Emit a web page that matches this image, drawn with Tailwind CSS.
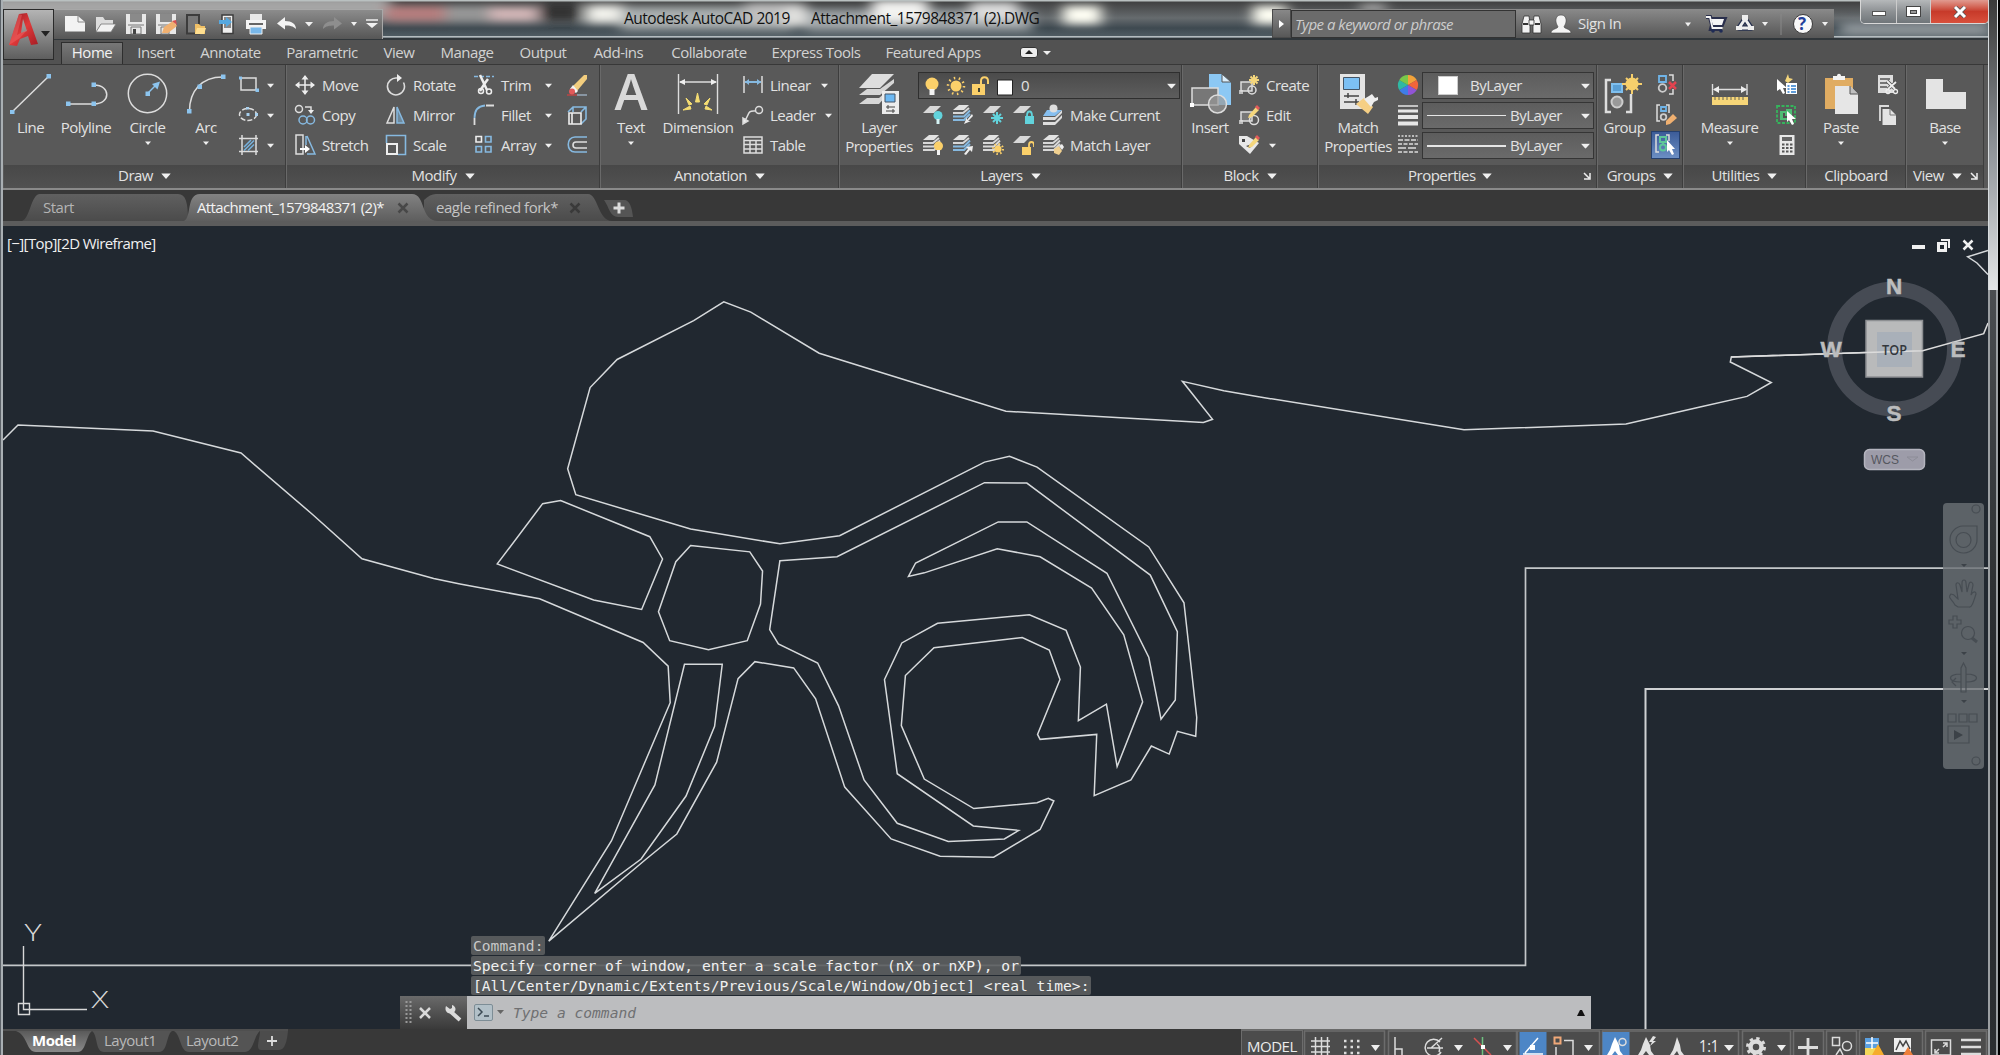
<!DOCTYPE html>
<html lang="en">
<head>
<meta charset="utf-8">
<title>Autodesk AutoCAD 2019</title>
<script src="https://cdn.jsdelivr.net/npm/@tailwindcss/browser@4"></script>
</head>
<body class="bg-black">
<svg width="0" height="0" class="absolute">
  <defs>
    <symbol id="caret" viewBox="0 0 8 5"><path d="M0 0.5h8L4 5z" fill="#f0f0f0"/></symbol>
    <symbol id="sheets" viewBox="0 0 22 22"><path d="M7 1h10l-5 5H1z" fill="#e2e2e2"/><path d="M1 9h10l6-5M1 12.500h11l6-6M1 16h11l6-6" stroke="#d8d8d8" stroke-width="2" fill="none"/></symbol>
    <symbol id="sheetsblue" viewBox="0 0 22 22"><path d="M7 1h10l-5 5H1z" fill="#e2e2e2"/><path d="M1 9h10l6-5" stroke="#d8d8d8" stroke-width="2" fill="none"/><path d="M1 12.500h11l6-6M1 16h11l6-6" stroke="#86b9e0" stroke-width="2" fill="none"/></symbol>
    <symbol id="sheet1" viewBox="0 0 22 22"><path d="M8 2h11l-7 7H1z" fill="#d8d8d8"/></symbol>
    <linearGradient id="tabg" x1="0" y1="0" x2="0" y2="1"><stop offset="0" stop-color="#606060"/><stop offset="1" stop-color="#4b4b4b"/></linearGradient>
    <linearGradient id="taba" x1="0" y1="0" x2="0" y2="1"><stop offset="0" stop-color="#828282"/><stop offset="1" stop-color="#5e5e5e"/></linearGradient>
    <linearGradient id="tabm" x1="0" y1="0" x2="0" y2="1"><stop offset="0" stop-color="#5a5a5a"/><stop offset="1" stop-color="#8a8a8a"/></linearGradient>
    <linearGradient id="redA" x1="0" y1="0" x2="1" y2="1"><stop offset="0" stop-color="#8e1620"/><stop offset=".5" stop-color="#e03a3a"/><stop offset="1" stop-color="#a51c24"/></linearGradient>
  </defs>
</svg>

<div class="relative flex h-[1055px] w-[2000px] overflow-hidden bg-black font-['Open_Sans','Noto_Sans',sans-serif] text-[15px] leading-[19px] tracking-[-0.5px] whitespace-nowrap text-[#e2e2e2]">
  <!-- left frame -->
  <div class="w-[3px] shrink-0 border-l border-[#5b6167] bg-[#a9afb3]"></div>

  <div class="flex w-[1985px] shrink-0 flex-col">
    <!-- title bar -->
    <header class="relative flex h-[40px] shrink-0 bg-[#454d53]">
      <svg class="absolute top-0 left-0" width="1985" height="40" viewBox="3 0 1985 40">
        <defs>
          <filter id="soft" x="-30%" y="-60%" width="160%" height="220%"><feGaussianBlur stdDeviation="7 4"/></filter>
          <linearGradient id="glass" x1="0" y1="0" x2="0" y2="1"><stop offset="0" stop-color="#3c3c3c"/><stop offset=".45" stop-color="#666b6e"/><stop offset=".7" stop-color="#3e4950"/><stop offset="1" stop-color="#58646b"/></linearGradient>
        </defs>
        <rect x="3" width="1985" height="40" fill="url(#glass)"/>
        <g filter="url(#soft)">
          <rect x="-10" y="-4" width="400" height="22" fill="#a5a5a5"/>
          <rect x="385" y="6" width="60" height="15" fill="#b97f7f"/>
          <rect x="445" y="6" width="50" height="15" fill="#999"/>
          <rect x="490" y="7" width="48" height="14" fill="#d7b9ba"/>
          <rect x="540" y="3" width="40" height="18" fill="#333"/>
          <rect x="586" y="5" width="38" height="18" fill="#f2f2ec"/>
          <rect x="620" y="7" width="172" height="23" fill="#abb0b1"/>
          <rect x="745" y="3" width="60" height="20" fill="#c0c0c0"/>
          <rect x="785" y="8" width="22" height="18" fill="#e2e2e0"/>
          <rect x="806" y="10" width="226" height="21" fill="#a2a7aa"/>
          <rect x="872" y="0" width="56" height="22" fill="#f2f2f0"/>
          <rect x="970" y="2" width="48" height="18" fill="#dcdcdc"/>
          <rect x="1063" y="6" width="38" height="18" fill="#fffff4"/>
          <rect x="1253" y="6" width="34" height="18" fill="#fffff4"/>
          <rect x="1360" y="4" width="26" height="8" fill="#b0b0b0"/>
          <rect x="1840" y="22" width="150" height="14" fill="#8d9499"/>
        </g>
        <rect x="3" y="0" width="1985" height="1.500" fill="#b9c0c0"/>
        <rect x="383" y="36" width="1605" height="1.500" fill="#b5bcbf"/>
        <rect x="3" y="38" width="1985" height="2" fill="#30363a"/>
      </svg>
      <!-- quick access toolbar -->
      <div class="relative mt-[9px] ml-[51px] h-[30px] w-[329px] border-t border-r border-[#a8a8a8] bg-linear-to-b from-[#8c8c8c] via-[#717171] to-[#565656]">
        <svg width="328" height="28" viewBox="54 10 328 28" fill="none">
          <path d="M65 16h13l7 6v9.500H65z" fill="#f2f2f2"/><path d="M78 16v6h7" stroke="#888"/>
          <path d="M96 32V17h7l2 3h8v4h-12z" fill="#dcdcdc"/><path d="M101 24h15l-5 8H96z" fill="#f2f2f2" stroke="#777" stroke-width=".8"/>
          <path d="M126 14h20v20h-20z" fill="#e8e8e8"/><path d="M130 14h12v8h-12z" fill="#8a8a8a"/><path d="M128 25h16M131 27h10v7h-10z" stroke="#777"/><path d="M133 29h3v5h-3z" fill="#444"/>
          <path d="M156 14h20v20h-20z" fill="#e8e8e8"/><path d="M160 14h12v8h-12z" fill="#8a8a8a"/><path d="M158 25h16M161 27h8v7h-8z" stroke="#777"/><path d="M162 33l2-6 9-6 4 5-9 7z" fill="#f0b070"/><path d="M172 21l4-1 1 5z" fill="#d65050"/>
          <rect x="187" y="15" width="12" height="18.500" stroke="#3c3c3c" stroke-width="2" fill="#777"/><path d="M195 34v-10h4l2 2h4v8z" fill="#f0c066"/><path d="M197 28h9l-2 6h-9z" fill="#ffdf90"/>
          <rect x="222" y="15" width="11" height="18.500" stroke="#3c3c3c" stroke-width="1.500" fill="#efefef"/><rect x="224" y="17" width="7" height="11" fill="#888"/><path d="M219 20h7v-3l6 5-6 5v-3h-7z" fill="#55a8e0"/>
          <path d="M250 14h12v6h-12z" fill="#e8e8e8"/><path d="M246 20h20v9h-20z" fill="#f4f4f4"/><path d="M249 24h14" stroke="#666" stroke-width="2"/><path d="M250 27h12v7h-12z" fill="#79b8ea" stroke="#eee"/>
          <path d="M277 23.500l8-6.500v4c7 0 11 3 11 8-3-3-6-3.500-11-3.500v4z" fill="#f4f4f4"/>
          <path d="M342 23.500l-8-6.500v4c-7 0-11 3-11 8 3-3 6-3.500 11-3.500v4z" fill="#8e8e8e"/>
          <path d="M305 22h8l-4 4.500zM351 22h6l-3 4zM366 23h12l-6 5z" fill="#f0f0f0"/><path d="M366 20h12" stroke="#f0f0f0" stroke-width="1.500"/>
        </svg>
      </div>
      <!-- document title -->
      <div class="relative flex h-[38px] w-[889px] text-[15.5px] leading-[36px] text-[#101010]">
        <span class="ml-[241px] w-[187px]">Autodesk AutoCAD 2019</span>
        <span>Attachment_1579848371 (2).DWG</span>
      </div>
      <!-- info centre -->
      <div class="relative mt-[9px] flex h-[29px] w-[562px] items-center bg-linear-to-b from-[#8a8a8a] to-[#565656]">
        <div class="flex h-[29px] w-[19px] items-center justify-center border border-[#4a4a4a]"><svg width="6" height="8" viewBox="0 0 6 8"><path d="M0 0l5 4-5 4z" fill="#fff"/></svg></div>
        <div class="h-[28px] w-[225px] border border-[#333] bg-[#6b6b6b] pl-[3px] text-[15px] leading-[26px] text-[#cdcdcd] italic">Type a keyword or phrase</div>
        <svg width="58" height="28" viewBox="1517 10 58 28"><g fill="#f2f2f2" stroke="#333" stroke-width=".8"><path d="M1525 16h5l1 8v9h-8v-9zM1535 16h5l2 8v9h-8v-9z"/><path d="M1530 20h5v5h-5z"/></g><path d="M1524 24h5M1536 24h5" stroke="#333" stroke-width="2"/><path d="M1562 15c4 0 5.500 3 5 7-.5 3-2 4-2 5 1 2 7 2 7 6h-20c0-4 6-4 7-6 0-1-1.500-2-2-5-.5-4 1-7 5-7z" fill="#f4f4f4" stroke="#444" stroke-width=".6"/></svg>
        <div class="w-[104px] pl-[4px]">Sign In</div>
        <svg width="156" height="28" viewBox="1679 10 156 28"><path d="M1686 22.500h6l-3 4zM1763 22h6l-3 4zM1823 22h6l-3 4z" fill="#f0f0f0"/><path d="M1707 17h4l2 8h10l2.500-6h-13M1713 25l-1 4h11" stroke="#2a2f4c" stroke-width="4" fill="none"/><path d="M1712 19h13l-2 6h-9z" fill="#f5f5f5"/><path d="M1707 17h4l2.500 11h10" stroke="#f5f5f5" stroke-width="1.800" fill="none"/><circle cx="1714" cy="31" r="1.800" fill="#1f2b55"/><circle cx="1722" cy="31" r="1.800" fill="#1f2b55"/><path d="M1746 19l-6 9h12z" stroke="#26304f" stroke-width="5.500" fill="none" stroke-linejoin="round"/><path d="M1746 19l-6 9h12z" stroke="#eee" stroke-width="3" fill="none" stroke-linejoin="round"/><path d="M1743 15h6v5h-6zM1737 26h6v4h-6zM1749 26h6v4h-6z" fill="#eee"/><path d="M1782 14v21" stroke="#888"/><circle cx="1804" cy="24" r="9.500" fill="#f8f8f8" stroke="#3a3a3a"/></svg>
        <div class="absolute top-[4px] left-[526px] text-[17px] leading-[21px] font-bold text-[#233f9a]">?</div>
      </div>
      <!-- window buttons -->
      <div class="absolute top-0 left-[1857px] flex h-[24px] w-[129px] overflow-hidden rounded-b-[5px] border border-t-0 border-[#d8d8d8]">
        <div class="flex w-[36px] items-center justify-center border-r border-[#ccc] bg-linear-to-b from-[#b5b8ba] via-[#8d9194] to-[#70767a]"><div class="mt-[4px] h-[5px] w-[14px] border border-[#555] bg-white"></div></div>
        <div class="flex w-[34px] items-center justify-center border-r border-[#ccc] bg-linear-to-b from-[#b5b8ba] via-[#8d9194] to-[#70767a]"><div class="flex h-[11px] w-[15px] items-center justify-center border border-[#444] bg-white"><div class="h-[4px] w-[7px] border border-[#444] bg-[#999]"></div></div></div>
        <div class="flex grow items-center justify-center bg-linear-to-b from-[#e09a90] via-[#c73a2a] to-[#d8503c]"><svg width="14" height="12" viewBox="0 0 14 12"><path d="M2 1l10 10M12 1L2 11" stroke="#555" stroke-width="4.500"/><path d="M2 1l10 10M12 1L2 11" stroke="#fff" stroke-width="3"/></svg></div>
      </div>
      <!-- application button -->
      <div class="absolute top-[9px] left-0 z-10 h-[51px] w-[51px] border border-[#2a2a2a] bg-linear-to-b from-[#b4b4b4] via-[#8a8a8a] to-[#5e5e5e]">
        <svg width="49" height="49" viewBox="4 10 49 49"><path d="M9 45L19 14l8-1 11 31-7 1-3-9-8 3-3 7zM21 33l6-2-4-12z" fill="url(#redA)"/><path d="M19 14l3 1-5 20 11-6-8 9-11 7z" fill="#ef6a6a" fill-opacity=".45"/><path d="M41 31h9l-4.500 5.500z" fill="#222"/></svg>
      </div>
    </header>

    <!-- ribbon tabs -->
    <nav class="flex h-[25px] shrink-0 items-end border-b border-[#383838] bg-[#525252] pl-[58px] text-center text-[#d2d2d2]">
      <div class="h-[22px] w-[62px] border border-b-0 border-[#2e2e2e] bg-linear-to-b from-[#777] to-[#5c5c5c] leading-[18px] text-[#f2f2f2]">Home</div>
      <div class="h-[21px] w-[66px] leading-[18px]">Insert</div>
      <div class="h-[21px] w-[83px] leading-[18px]">Annotate</div>
      <div class="h-[21px] w-[100px] leading-[18px]">Parametric</div>
      <div class="h-[21px] w-[54px] leading-[18px]">View</div>
      <div class="h-[21px] w-[82px] leading-[18px]">Manage</div>
      <div class="h-[21px] w-[70px] leading-[18px]">Output</div>
      <div class="h-[21px] w-[81px] leading-[18px]">Add-ins</div>
      <div class="h-[21px] w-[100px] leading-[18px]">Collaborate</div>
      <div class="h-[21px] w-[114px] leading-[18px]">Express Tools</div>
      <div class="h-[21px] w-[120px] leading-[18px]">Featured Apps</div>
      <svg class="ml-[26px] h-[24px]" width="34" height="24" viewBox="1019 40 34 24"><rect x="1020.500" y="47.500" width="17" height="10" rx="2.500" fill="#ededed" stroke="#333"/><path d="M1025 54h8l-4-4z" fill="#222"/><path d="M1043 51h8l-4 4z" fill="#eee"/></svg>
    </nav>

    <!-- ribbon panels -->
    <div class="flex h-[123px] shrink-0 bg-[#595959] pl-[1px]">
      <!-- Draw -->
      <section class="flex w-[282px] flex-col border-r border-[#3d3d3d]">
        <div class="flex h-[100px] pt-[5px]">
          <div class="flex w-[53px] flex-col items-center gap-[4px] pt-[1px]"><svg width="43" height="43" viewBox="10 71 43 43"><path d="M13 112L50 76" stroke="#ddd" stroke-width="1.500"/><path d="M11 110h4.500v4.500H11zM47.500 74h4.500v4.500h-4.500z" fill="#8cc4ee"/></svg><span>Line</span></div>
          <div class="flex w-[58px] flex-col items-center gap-[4px] pt-[1px]"><svg width="43" height="43" viewBox="64 71 43 43"><path d="M67 104h26c17 0 17-19 0-19" fill="none" stroke="#ddd" stroke-width="1.500"/><path d="M65 101.500h4.500v4.500H65zM90.500 101.500h4.500v4.500h-4.500zM90.500 82.500h4.500v4.500h-4.500z" fill="#8cc4ee"/></svg><span>Polyline</span></div>
          <div class="flex w-[65px] flex-col items-center gap-[4px] pt-[1px]"><svg width="43" height="43" viewBox="126 71 43 43"><circle cx="147.500" cy="93.500" r="19.200" fill="none" stroke="#ddd" stroke-width="1.500"/><path d="M148 93l8-8" stroke="#8cc4ee" stroke-width="1.500"/><path d="M160 81.500l-8 2.500 5.500 5.500zM145.500 91.500h4.500v4.500h-4.500z" fill="#8cc4ee"/></svg><span>Circle</span><svg width="6" height="4"><use href="#caret"/></svg></div>
          <div class="flex w-[52px] flex-col items-center gap-[4px] pt-[1px]"><svg width="43" height="43" viewBox="186 71 43 43"><path d="M190.500 111c0-20 12-34 33-34" fill="none" stroke="#ddd" stroke-width="1.500"/><path d="M188 109h4.500v4.500H188zM198.500 84.500h4.500v4.500h-4.500zM222 74.500h4.500v4.500H222z" fill="#8cc4ee"/></svg><span>Arc</span><svg width="6" height="4"><use href="#caret"/></svg></div>
          <div class="flex flex-col pl-[5px]">
            <div class="flex h-[30px] items-center gap-[8px]"><svg width="22" height="22" viewBox="236 75 22 22"><path d="M240 79h15v12h-15z" fill="none" stroke="#ddd" stroke-width="1.500"/><path d="M238 77.500h3v3h-3zM254.500 89.500h3.500v3.500h-3.500z" fill="#8cc4ee"/></svg><svg width="7" height="5"><use href="#caret"/></svg></div>
            <div class="flex h-[30px] items-center gap-[8px]"><svg width="22" height="22" viewBox="236 105 22 22"><ellipse cx="247" cy="115.500" rx="8.500" ry="6" fill="none" stroke="#ddd" stroke-width="1.500" stroke-dasharray="5 2"/><path d="M245.500 114h3v3h-3zM245 108h3v2.500h-3zM254 114h3v3h-3z" fill="#a8d0ee"/></svg><svg width="7" height="5"><use href="#caret"/></svg></div>
            <div class="flex h-[30px] items-center gap-[8px]"><svg width="22" height="22" viewBox="236 135 22 22"><path d="M238 139.500h19M238 152.500h19M241 136v20M255 136v20" stroke="#ddd" stroke-width="1.500"/><path d="M243 148l7-7M243 151.500l10-10M247 151.500l6-6" stroke="#77b2de" stroke-width="1.500"/></svg><svg width="7" height="5"><use href="#caret"/></svg></div>
          </div>
        </div>
        <footer class="flex h-[23px] items-center justify-center gap-[8px] bg-linear-to-b from-[#484848] to-[#515151] pb-[2px]">Draw <svg width="10" height="6" viewBox="0 0 8 5"><use href="#caret"/></svg></footer>
      </section>
      <!-- Modify -->
      <section class="flex w-[314px] flex-col border-r border-l border-r-[#3d3d3d] border-l-[#696969]">
        <div class="flex h-[100px] pt-[5px]">
          <div class="w-[95px] pl-[7px]">
            <div class="flex h-[30px] items-center gap-[6px]"><svg width="22" height="22" viewBox="0 0 22 22"><path d="M11 2v18M2 11h18" stroke="#eee" stroke-width="1.500"/><path d="M11 1l3.500 4.500h-7zM11 21l3.500-4.500h-7zM1 11l4.500-3.500v7zM21 11l-4.500-3.500v7z" fill="#eee"/></svg>Move</div>
            <div class="flex h-[30px] items-center gap-[6px]"><svg width="22" height="22" viewBox="0 0 22 22" fill="none" stroke-width="1.500"><circle cx="5" cy="5" r="3.500" stroke="#ddd"/><path d="M11 3h6v5" stroke="#ddd"/><path d="M14 6h6l-3 4z" fill="#eee"/><circle cx="9" cy="16" r="4" stroke="#86b9e0"/><circle cx="16.500" cy="16" r="4" stroke="#86b9e0"/></svg>Copy</div>
            <div class="flex h-[30px] items-center gap-[6px]"><svg width="22" height="22" viewBox="0 0 22 22" fill="none" stroke-width="1.500"><path d="M2 1h7v19H2z" stroke="#ddd"/><path d="M13 2l8 18h-8M12 2v9" stroke="#86b9e0"/><path d="M6 15h6" stroke="#fff" stroke-width="2"/><path d="M11 11l5 4-5 4z" fill="#fff"/></svg>Stretch</div>
          </div>
          <div class="w-[87px] pl-[3px]">
            <div class="flex h-[30px] items-center gap-[6px]"><svg width="22" height="22" viewBox="0 0 22 22" fill="none" stroke-width="1.600"><path d="M12 4a8.500 8.500 0 1 0 6.500 4.500" stroke="#ddd"/><path d="M12 0l5 4-5 4z" fill="#eee"/></svg>Rotate</div>
            <div class="flex h-[30px] items-center gap-[6px]"><svg width="22" height="22" viewBox="0 0 22 22" fill="none" stroke-width="1.500"><path d="M9 3v16H2z" stroke="#ddd"/><path d="M12 3v16h7z" fill="#86b9e0" fill-opacity=".5" stroke="#86b9e0"/></svg>Mirror</div>
            <div class="flex h-[30px] items-center gap-[6px]"><svg width="22" height="22" viewBox="0 0 22 22" fill="none"><path d="M1.500 9V1.500h19v19H13" stroke="#86b9e0" stroke-width="1.600"/><path d="M2 10h10v10H2z" stroke="#eee" stroke-width="2"/></svg>Scale</div>
          </div>
          <div class="w-[92px] pl-[4px]">
            <div class="flex h-[30px] items-center gap-[6px]"><svg width="22" height="22" viewBox="0 0 22 22" fill="none"><path d="M1 2.500h20" stroke="#86b9e0" stroke-width="1.500" stroke-dasharray="4 2"/><path d="M7 1l7 15M15 5l-3 4-5 8" stroke="#eee" stroke-width="2.500"/><circle cx="8" cy="17" r="2.500" stroke="#eee" stroke-width="1.500"/><circle cx="16" cy="17.500" r="2.500" stroke="#eee" stroke-width="1.500"/></svg><span class="w-[38px]">Trim</span><svg width="7" height="5"><use href="#caret"/></svg></div>
            <div class="flex h-[30px] items-center gap-[6px]"><svg width="22" height="22" viewBox="0 0 22 22" fill="none" stroke-width="1.800"><path d="M1.500 14C1.500 6 5 2 12 1.500" stroke="#86b9e0"/><path d="M13 1.500h8M1.500 14v7" stroke="#ddd"/></svg><span class="w-[38px]">Fillet</span><svg width="7" height="5"><use href="#caret"/></svg></div>
            <div class="flex h-[30px] items-center gap-[6px]"><svg width="22" height="22" viewBox="0 0 22 22" fill="none" stroke-width="1.600" stroke="#86b9e0"><path d="M3 2.500h5.500v5.500H3z" stroke="#eee"/><path d="M12.500 2.500H18v5.500h-5.500zM3 12.500h5.500V18H3zM12.500 12.500H18V18h-5.500z"/></svg><span class="w-[38px]">Array</span><svg width="7" height="5"><use href="#caret"/></svg></div>
          </div>
          <div class="pl-[4px]">
            <div class="flex h-[30px] items-center"><svg width="24" height="24" viewBox="0 0 24 24"><path d="M2 22h10" stroke="#b44" stroke-width="1.500"/><path d="M12 22h10" stroke="#9ab" stroke-width="1.500"/><path d="M8 13L19 2l3 0v4L12 18z" fill="#f2cd7e"/><path d="M8 12l5 6-2 2-6-4z" fill="#f4f4f4"/><circle cx="7" cy="18.500" r="3" fill="#e25a5a"/></svg></div>
            <div class="flex h-[30px] items-center"><svg width="24" height="24" viewBox="0 0 24 24" fill="none" stroke-width="1.600"><path d="M3 9l5-5h13v12l-5 5M16 9l5-5M8 4v5" stroke="#86b9e0"/><path d="M4 10h12v11H4zM7 10v11" stroke="#eee"/></svg></div>
            <div class="flex h-[30px] items-center"><svg width="24" height="24" viewBox="0 0 24 24" fill="none" stroke-width="1.600"><path d="M22 4H10c-9 0-9 15 0 15h12" stroke="#86b9e0"/><path d="M22 9H11c-4 0-4 6 0 6h11" stroke="#ddd"/></svg></div>
          </div>
        </div>
        <footer class="flex h-[23px] items-center justify-center gap-[8px] bg-linear-to-b from-[#484848] to-[#515151] pb-[2px]">Modify <svg width="10" height="6" viewBox="0 0 8 5"><use href="#caret"/></svg></footer>
      </section>
      <!-- Annotation -->
      <section class="flex w-[239px] flex-col border-r border-l border-r-[#3d3d3d] border-l-[#696969]">
        <div class="flex h-[100px] pt-[5px]">
          <div class="flex w-[60px] flex-col items-center gap-[4px] pt-[1px]"><span class="flex h-[43px] items-end overflow-visible text-[50px] leading-[46px] font-semibold tracking-normal text-[#d9d9d9]">A</span><span>Text</span><svg width="6" height="4"><use href="#caret"/></svg></div>
          <div class="flex w-[74px] flex-col items-center gap-[4px] pt-[1px]"><svg width="43" height="43" viewBox="677 71 43 43"><path d="M678.500 74v40M717.500 74v40M680 82h36" stroke="#ddd" stroke-width="1.400"/><path d="M679 82l6-3v6zM717 82l-6-3v6z" fill="#eee"/><path d="M683 110l8-1-1-3zM712 110l-7-1 1-3zM686 98l6 6-3 1zM710 98l-6 6 3 1zM697.500 93l-2 9h4z" fill="#f4dc72" stroke="#f4dc72"/></svg><span>Dimension</span></div>
          <div class="pl-[7px]">
            <div class="flex h-[30px] items-center gap-[6px]"><svg width="22" height="22" viewBox="0 0 22 22" fill="none" stroke-width="1.500"><path d="M2 2v17M20 2v17" stroke="#ddd"/><path d="M3 8h16" stroke="#86b9e0" stroke-width="2"/><path d="M3 8l4-3v6zM19 8l-4-3v6z" fill="#86b9e0"/></svg>Linear<svg class="ml-[4px]" width="7" height="5"><use href="#caret"/></svg></div>
            <div class="flex h-[30px] items-center gap-[6px]"><svg width="22" height="22" viewBox="0 0 22 22" fill="none" stroke-width="1.500" stroke="#ddd"><circle cx="17" cy="6" r="3.500"/><path d="M13 7c-8-1-6 5-10 9"/><path d="M1 20v-6l5 3z" fill="#eee"/></svg>Leader<svg class="ml-[4px]" width="7" height="5"><use href="#caret"/></svg></div>
            <div class="flex h-[30px] items-center gap-[6px]"><svg width="22" height="22" viewBox="0 0 22 22" fill="none" stroke-width="1.500" stroke="#ddd"><path d="M2 3h18v16H2zM2 6.500h18M2 10.500h18M2 15h18M8 6v13M14 6v13"/></svg>Table</div>
          </div>
        </div>
        <footer class="flex h-[23px] items-center justify-center gap-[8px] bg-linear-to-b from-[#484848] to-[#515151] pb-[2px]">Annotation <svg width="10" height="6" viewBox="0 0 8 5"><use href="#caret"/></svg></footer>
      </section>
      <!-- Layers -->
      <section class="flex w-[343px] flex-col border-r border-l border-r-[#3d3d3d] border-l-[#696969]">
        <div class="flex h-[100px] pt-[5px]">
          <div class="flex w-[78px] flex-col items-center"><svg class="mt-[1px] mb-[4px]" width="43" height="43" viewBox="858 71 43 43"><path d="M872 74h22l-14 14h-21z" fill="#dedede"/><path d="M867 89l13 0 14-10 0 4-14 12h-21z" fill="#d6d6d6"/><path d="M867 98h12l8-7v4l-8 9h-20z" fill="#d6d6d6"/><path d="M882 91h17v23h-17z" fill="#ececec"/><path d="M885 94h10v8h-10z" fill="#6cb8f2" stroke="#456"/><path d="M886 107h9M886 111h9M888 105v4M893 109v4" stroke="#444"/></svg><span>Layer</span><span>Properties</span></div>
          <div>
            <div class="mt-[2px] flex h-[27px] w-[262px] items-center border border-[#2f2f2f] bg-linear-to-b from-[#4b4b4b] to-[#5d5d5d]">
              <svg width="106" height="24" viewBox="919 73 106 24"><circle cx="932" cy="83" r="6.500" fill="#fbd06a"/><path d="M929.500 88h5v6h-5z" fill="#f2f2f2"/><circle cx="956" cy="85" r="5.500" fill="#fbd06a"/><circle cx="956" cy="85" r="8" fill="none" stroke="#fbd06a" stroke-width="2.500" stroke-dasharray="1.500 3.530"/><path d="M972 83h13v11h-13z" fill="#fbd06a"/><path d="M981 84v-4c0-5 7-5 7 0v3" fill="none" stroke="#fbd06a" stroke-width="2"/><path d="M978 87h2v4h-2z" fill="#443"/><path d="M997.500 79h15v15h-15z" fill="#fff" stroke="#222"/></svg>
              <span class="w-[142px] -ml-[5px] pl-[1px]">0</span><svg class="ml-[5px]" width="9" height="6" viewBox="0 0 8 5"><use href="#caret"/></svg>
            </div>
            <div class="mt-[1px] flex h-[30px] items-center gap-[8px] pl-[4px]">
              <svg width="22" height="22" viewBox="0 0 22 22"><use href="#sheet1"/><circle cx="16" cy="11.500" r="4.500" fill="#62d3dc"/><path d="M14.500 15h3v5h-3z" fill="#d5f3f5"/></svg>
              <svg width="22" height="22" viewBox="0 0 22 22"><use href="#sheetsblue"/><path d="M20 10l-5 6v-3l-3 7 7-3h-3l5-5z" fill="#eee"/></svg>
              <svg width="22" height="22" viewBox="0 0 22 22"><use href="#sheet1"/><path d="M15 8v12M9 14h12M11 10l8 8M19 10l-8 8" stroke="#62d3dc" stroke-width="2"/></svg>
              <svg width="22" height="22" viewBox="0 0 22 22"><use href="#sheet1"/><path d="M13 12h9v8h-9z" fill="#62d3dc"/><path d="M15 12c0-6 5-6 5 0" fill="none" stroke="#62d3dc" stroke-width="1.800"/></svg>
              <svg width="22" height="22" viewBox="0 0 22 22"><path d="M1 13h12l7-7v3l-7 7H1zM1 18h12l7-7v3l-7 7H1z" fill="#dedede"/><path d="M5 6h15l-7 6H1z" fill="#86bff0"/><circle cx="11.500" cy="4.500" r="4" fill="#dedede"/></svg>
              <span class="-ml-[2px]">Make Current</span>
            </div>
            <div class="flex h-[30px] items-center gap-[8px] pl-[4px]">
              <svg width="22" height="22" viewBox="0 0 22 22"><use href="#sheets"/><circle cx="16.500" cy="12" r="4.500" fill="#fbd06a"/><path d="M15 16h3v5h-3z" fill="#f2f2f2"/></svg>
              <svg width="22" height="22" viewBox="0 0 22 22"><use href="#sheetsblue"/><path d="M21 12l-7 1 2 2-4 5 2 1 4-5 2 2z" fill="#eee"/></svg>
              <svg width="22" height="22" viewBox="0 0 22 22"><use href="#sheets"/><circle cx="16" cy="15" r="3.500" fill="#fbd06a"/><circle cx="16" cy="15" r="5" fill="none" stroke="#fbd06a" stroke-width="2" stroke-dasharray="1.500 2.400"/></svg>
              <svg width="22" height="22" viewBox="0 0 22 22"><use href="#sheet1"/><path d="M10 13h9v8h-9z" fill="#fbd06a"/><path d="M17 13v-2c0-4 5-4 5 0v2" fill="none" stroke="#fbd06a" stroke-width="1.800"/></svg>
              <svg width="22" height="22" viewBox="0 0 22 22"><use href="#sheets"/><path d="M12 15l5-3 3 5-3 4-5-2z" fill="#f0d090"/><path d="M17 12l3-2 2 3-2 3z" fill="#eee"/></svg>
              <span class="-ml-[2px]">Match Layer</span>
            </div>
          </div>
        </div>
        <footer class="flex h-[23px] items-center justify-center gap-[8px] bg-linear-to-b from-[#484848] to-[#515151] pb-[2px]">Layers <svg width="10" height="6" viewBox="0 0 8 5"><use href="#caret"/></svg></footer>
      </section>
      <!-- Block -->
      <section class="flex w-[136px] flex-col border-r border-l border-r-[#3d3d3d] border-l-[#696969]">
        <div class="flex h-[100px] pt-[5px]">
          <div class="flex w-[54px] flex-col items-center gap-[4px] pt-[1px]"><svg width="43" height="43" viewBox="1188 71 43 43"><path d="M1208 74h13l9 8v23h-22z" fill="#8cc8f4"/><path d="M1221 74v8h9z" fill="#dbeefb" stroke="#555"/><path d="M1191 88h26v17h-26z" fill="#777" stroke="#ddd" stroke-width="1.500"/><circle cx="1216.500" cy="104" r="9" fill="#999" fill-opacity=".7" stroke="#ddd" stroke-width="1.500"/><path d="M1189 103h4v4h-4z" fill="#fff"/></svg><span>Insert</span></div>
          <div class="pl-[1px]">
            <div class="flex h-[30px] items-center gap-[5px]"><svg width="23" height="22" viewBox="0 0 23 22" fill="none" stroke="#ddd" stroke-width="1.500"><path d="M3 8h11v9H3z" fill="#777"/><circle cx="14" cy="16" r="4"/><path d="M1 17h4M1 19h4"/><path d="M16 1v10M11 6h10M12.500 2.500l7 7M19.500 2.500l-7 7" stroke="#f4d67c" stroke-width="2"/></svg>Create</div>
            <div class="flex h-[30px] items-center gap-[5px]"><svg width="23" height="22" viewBox="0 0 23 22" fill="none" stroke="#ddd" stroke-width="1.500"><path d="M3 8h11v9H3z" fill="#777"/><circle cx="16" cy="16" r="4.500"/><path d="M1 17h4M1 19h4"/><path d="M11 11l7-8 3 3-7 7-4 1z" fill="#f4d67c" stroke="none"/><path d="M17 3l2-2 3 3-2 2z" fill="#e25a5a" stroke="none"/></svg>Edit</div>
            <div class="flex h-[30px] items-center gap-[8px]"><svg width="23" height="22" viewBox="0 0 23 22"><path d="M1 2h8l12 7-9 11L1 10z" fill="#e8e8e8"/><path d="M4 5h3v3H4zM8 12l6-2-2 4z" fill="#444"/><path d="M11 11l7-8 3 3-7 7-4 1z" fill="#f4d67c"/><path d="M17 3l2-2 3 3-2 2z" fill="#e25a5a"/></svg><svg width="7" height="5"><use href="#caret"/></svg></div>
          </div>
        </div>
        <footer class="flex h-[23px] items-center justify-center gap-[8px] bg-linear-to-b from-[#484848] to-[#515151] pb-[2px]">Block <svg width="10" height="6" viewBox="0 0 8 5"><use href="#caret"/></svg></footer>
      </section>
      <!-- Properties -->
      <section class="flex w-[279px] flex-col border-r border-l border-r-[#3d3d3d] border-l-[#696969]">
        <div class="flex h-[100px] pt-[5px]">
          <div class="flex w-[78px] flex-col items-center"><svg class="mt-[1px] mb-[4px]" width="43" height="43" viewBox="1337 71 43 43"><path d="M1340 74h25v35h-25z" fill="#e4e4e4"/><path d="M1343.500 77.500h16v12h-16z" fill="#7cc0f4" stroke="#456"/><path d="M1344 96h15M1344 102h15M1348 93v5M1356 99v6" stroke="#444" stroke-width="1.500"/><path d="M1356 104l8-6 9 9-5 7z" fill="#f6cf84"/><path d="M1364 99l5-3 3-2 3 4 3-1 0 3-4 2-3 5z" fill="#eee"/></svg><span>Match</span><span>Properties</span></div>
          <div class="flex w-[25px] flex-col">
            <div class="flex h-[30px] items-center"><svg width="22" height="22" viewBox="0 0 22 22"><path d="M11 11V1a10 10 0 0 1 8.700 5z" fill="#f2a33a"/><path d="M11 11l8.700-5a10 10 0 0 1 0 10z" fill="#f1653a"/><path d="M11 11l8.700 5a10 10 0 0 1-8.700 5z" fill="#9154d6"/><path d="M11 11v10a10 10 0 0 1-8.700-5z" fill="#3f7de8"/><path d="M11 11l-8.700 5a10 10 0 0 1 0-10z" fill="#2fb8a4"/><path d="M11 11L2.300 6A10 10 0 0 1 11 1z" fill="#79c84a"/></svg></div>
            <div class="flex h-[30px] items-center"><svg width="22" height="22" viewBox="0 0 22 22" stroke="#e6e6e6"><path d="M1 2h20" stroke-width="1.500"/><path d="M1 7h20" stroke-width="3"/><path d="M1 13h20" stroke-width="4"/><path d="M1 19.500h20" stroke-width="4"/></svg></div>
            <div class="flex h-[30px] items-center"><svg width="22" height="22" viewBox="0 0 22 22" stroke="#ddd" stroke-width="1.500"><path d="M1 2h20" stroke-dasharray="2 1.500"/><path d="M1 6h20" stroke-dasharray="5 1.500"/><path d="M1 10h20M1 18h20" stroke-dasharray="4 1.500"/><path d="M1 14h20" stroke-dasharray="8 2"/></svg></div>
          </div>
          <div class="flex flex-col gap-[3px] pt-[2px]">
            <div class="flex h-[27px] w-[172px] items-center border border-[#353535] bg-linear-to-b from-[#5d5d5d] to-[#6a6a6a]"><div class="ml-[15px] h-[19px] w-[20px] border border-[#ccc] bg-white"></div><span class="ml-[12px] w-[111px]">ByLayer</span><svg width="9" height="6" viewBox="0 0 8 5"><use href="#caret"/></svg></div>
            <div class="flex h-[27px] w-[172px] items-center border border-[#353535] bg-linear-to-b from-[#5d5d5d] to-[#6a6a6a]"><div class="ml-[4px] h-px w-[79px] bg-[#e6e6e6]"></div><span class="ml-[4px] w-[71px]">ByLayer</span><svg width="9" height="6" viewBox="0 0 8 5"><use href="#caret"/></svg></div>
            <div class="flex h-[27px] w-[172px] items-center border border-[#353535] bg-linear-to-b from-[#5d5d5d] to-[#6a6a6a]"><div class="ml-[4px] h-[2px] w-[79px] bg-[#e6e6e6]"></div><span class="ml-[4px] w-[71px]">ByLayer</span><svg width="9" height="6" viewBox="0 0 8 5"><use href="#caret"/></svg></div>
          </div>
        </div>
        <footer class="flex h-[23px] items-center bg-linear-to-b from-[#484848] to-[#515151] pb-[2px] pl-[89px]"><span class="w-[74px]">Properties</span><svg width="10" height="6" viewBox="0 0 8 5"><use href="#caret"/></svg><svg class="ml-[91px]" width="8" height="8" viewBox="0 0 8 8"><path d="M1 1l5 5M7 1v6H1" stroke="#eee" stroke-width="1.500" fill="none"/></svg></footer>
      </section>
      <!-- Groups -->
      <section class="flex w-[86px] flex-col border-r border-l border-r-[#3d3d3d] border-l-[#696969]">
        <div class="flex h-[100px] pt-[5px]">
          <div class="flex w-[53px] flex-col items-center gap-[4px] pt-[1px]"><svg width="43" height="43" viewBox="1603 71 43 43"><path d="M1611 80h-5v32h5M1626 112h5v-18" fill="none" stroke="#ddd" stroke-width="2.500"/><path d="M1612 84h10v8h-10z" fill="#5a9fd4" stroke="#7fbfee" stroke-width="2"/><circle cx="1617" cy="102" r="5.500" fill="#999" stroke="#ccc" stroke-width="2"/><circle cx="1632" cy="84" r="6.500" fill="#f6cf6c"/><path d="M1632 74v20M1622 84h20M1626 78l12 12M1638 78l-12 12" stroke="#f6cf6c" stroke-width="2"/></svg><span>Group</span></div>
          <div class="flex flex-col">
            <div class="flex h-[30px] items-center pl-[5px]"><svg width="22" height="22" viewBox="0 0 22 22" fill="none"><path d="M3 2h7v6H3z" stroke="#6fb4e8" stroke-width="1.800"/><circle cx="6.500" cy="14" r="3.800" stroke="#ccc" stroke-width="1.800"/><path d="M13 1h4v6M17 15v5h-4" stroke="#ddd" stroke-width="1.500"/><path d="M13 8l7 7M20 8l-7 7" stroke="#e2434f" stroke-width="2.500"/></svg></div>
            <div class="flex h-[30px] items-center pl-[5px]"><svg width="22" height="22" viewBox="0 0 22 22" fill="none"><path d="M4 1H1v16h3M10 1h3v8" stroke="#ddd" stroke-width="1.500"/><path d="M5 3h5v4H5z" stroke="#6fb4e8" stroke-width="1.800"/><circle cx="7.500" cy="13" r="2.800" stroke="#ccc" stroke-width="1.800"/><path d="M10 17l7-7 4 4-7 6-4 1z" fill="#f0b070"/></svg></div>
            <div class="mt-[1px] flex h-[28px] w-[29px] items-center border border-[#25406e] bg-linear-to-b from-[#3c5c98] to-[#6c8fc4] pl-[3px]"><svg width="22" height="22" viewBox="0 0 22 22" fill="none"><path d="M4 1H1v17h3M11 1h3v6" stroke="#ddd" stroke-width="1.500"/><path d="M5 3h6v5H5zM8 9v2" stroke="#5dc79a" stroke-width="2"/><circle cx="8" cy="13.500" r="3" stroke="#5dc79a" stroke-width="2"/><path d="M12 6l8 9h-3l2 5-2 1-3-5-2 2z" fill="#fff"/></svg></div>
          </div>
        </div>
        <footer class="flex h-[23px] items-center justify-center gap-[8px] bg-linear-to-b from-[#484848] to-[#515151] pb-[2px]">Groups <svg width="10" height="6" viewBox="0 0 8 5"><use href="#caret"/></svg></footer>
      </section>
      <!-- Utilities -->
      <section class="flex w-[123px] flex-col border-r border-l border-r-[#3d3d3d] border-l-[#696969]">
        <div class="flex h-[100px] pt-[5px]">
          <div class="flex w-[91px] flex-col items-center gap-[4px] pt-[1px]"><svg width="43" height="43" viewBox="1708 71 43 43"><path d="M1712.500 84v11M1747 84v11M1714 89.500h32" stroke="#ddd" stroke-width="1.400"/><path d="M1713 89.500l6-3.500v7zM1747 89.500l-6-3.500v7z" fill="#eee"/><path d="M1712 97h36v8h-36z" fill="#f7d678"/><path d="M1715 97v3M1719 97v3M1723 97v3M1727 97v3M1731 97v3M1735 97v3M1739 97v3M1743 97v3" stroke="#665"/></svg><span>Measure</span><svg width="6" height="4"><use href="#caret"/></svg></div>
          <div>
            <div class="flex h-[30px] items-center"><svg width="24" height="24" viewBox="0 0 24 24"><path d="M13 1l1 4 4 1-5 4-3-2z" fill="#f4d67c"/><path d="M2 6l10 9-4 0 2 5-2 1-3-5-3 2z" fill="#fff"/><path d="M11 10h11v11H11z" fill="#fff"/><path d="M12.500 13h2M16 13h5M12.500 16h2M16 16h5M12.500 19h2M16 19h5" stroke="#2d7ccc" stroke-width="1.500"/></svg></div>
            <div class="flex h-[30px] items-center"><svg width="24" height="24" viewBox="0 0 24 24" fill="none"><path d="M2 3h18v17H2z" stroke="#35b45c" stroke-width="1.800" stroke-dasharray="3 1.500"/><path d="M5 8h6v-2h6v11H5z" fill="#4fbd74"/><path d="M9 10v4h5" stroke="#505050" stroke-width="2"/><path d="M12 8l9 8h-4l2 5-2 1-3-5-2 2z" fill="#fff"/></svg></div>
            <div class="flex h-[30px] items-center"><svg width="24" height="24" viewBox="0 0 24 24"><path d="M4.500 2h15v20h-15z" fill="#e8e8e8"/><path d="M7 4h10v4H7z" fill="#666"/><path d="M7 11.500h11M7 15h11M7 18.500h11" stroke="#555" stroke-width="2.200" stroke-dasharray="2.500 1.500"/></svg></div>
          </div>
        </div>
        <footer class="flex h-[23px] items-center justify-center gap-[8px] bg-linear-to-b from-[#484848] to-[#515151] pb-[2px]">Utilities <svg width="10" height="6" viewBox="0 0 8 5"><use href="#caret"/></svg></footer>
      </section>
      <!-- Clipboard -->
      <section class="flex w-[100px] flex-col border-r border-l border-r-[#3d3d3d] border-l-[#696969]">
        <div class="flex h-[100px] pt-[5px]">
          <div class="flex w-[68px] flex-col items-center gap-[4px] pt-[1px]"><svg width="43" height="43" viewBox="1819 71 43 43"><path d="M1824 78h28v31h-28z" fill="#e0ac62"/><path d="M1832 76h4c0-3 4-3 4 0h4v4h-12z" fill="#f4f4f4"/><path d="M1834 86h15l8 8v20h-23z" fill="#e6e6e6"/><path d="M1849 86v8h8" fill="#c0c0c0" stroke="#555"/></svg><span>Paste</span><svg width="6" height="4"><use href="#caret"/></svg></div>
          <div>
            <div class="flex h-[30px] items-center"><svg width="24" height="24" viewBox="0 0 24 24" fill="none"><path d="M3 2h15v18H3z" fill="#dedede"/><path d="M5 6h10M5 10h11M5 14h7" stroke="#555" stroke-width="1.500"/><path d="M12 8l8 8M21 9l-8 7" stroke="#555" stroke-width="3.500"/><path d="M12 8l8 8M21 9l-8 7" stroke="#eee" stroke-width="1.800"/><circle cx="13" cy="18.500" r="2" stroke="#eee" stroke-width="1.300"/><circle cx="20.500" cy="18.500" r="2" stroke="#eee" stroke-width="1.300"/></svg></div>
            <div class="flex h-[30px] items-center"><svg width="24" height="24" viewBox="0 0 24 24"><path d="M5 18V3h9" stroke="#ddd" stroke-width="1.800" fill="none"/><path d="M7.500 6H15l6 6v10H7.500z" fill="#e4e4e4"/><path d="M15 6v6h6" stroke="#777" fill="none"/></svg></div>
          </div>
        </div>
        <footer class="flex h-[23px] items-center justify-center bg-linear-to-b from-[#484848] to-[#515151] pb-[2px]">Clipboard</footer>
      </section>
      <!-- View -->
      <section class="flex w-[78px] flex-col border-r border-l border-r-[#3d3d3d] border-l-[#696969]">
        <div class="flex h-[100px] flex-col items-center gap-[4px] pt-[6px]"><svg width="43" height="43" viewBox="1924 71 43 43"><path d="M1926 79h17v13h23v17h-40z" fill="#e4e4e4"/></svg><span>Base</span><svg width="6" height="4"><use href="#caret"/></svg></div>
        <footer class="flex h-[23px] items-center bg-linear-to-b from-[#484848] to-[#515151] pb-[2px] pl-[6px]"><span class="w-[39px]">View</span><svg width="10" height="6" viewBox="0 0 8 5"><use href="#caret"/></svg><svg class="ml-[8px]" width="8" height="8" viewBox="0 0 8 8"><path d="M1 1l5 5M7 1v6H1" stroke="#eee" stroke-width="1.500" fill="none"/></svg></footer>
      </section>
    </div>

    <!-- drawing file tabs -->
    <div class="relative flex h-[33px] shrink-0 items-center border-t-2 border-[#8a8a8a] bg-[#383838] pt-[4px] text-[#b4b4b4]">
      <svg class="absolute top-0 left-0" width="660" height="31" viewBox="3 190 660 31"><path d="M22 221c8-2 9-27 18-27h138c8 0 10 9 10 27z" fill="url(#tabg)" /><path d="M424 200c4-4 8-6 12-6h152c10 0 10 27 24 27H424z" fill="url(#tabg)"/><path d="M184 221c8-4 2-27 16-27h212c14 0 8 27 26 27z" fill="url(#taba)"/><path d="M604 200h20c6 0 8 8 9 17h-15c-8 0-9-10-14-17z" fill="#555"/></svg>
      <span class="relative w-[154px] pl-[40px]">Start</span>
      <span class="relative w-[240px] pl-[40px] tracking-[-0.65px] text-[#f2f2f2]">Attachment_1579848371 (2)*</span>
      <svg class="relative" width="12" height="12" viewBox="0 0 12 12"><path d="M1.500 1.500l9 9M10.500 1.500l-9 9" stroke="#484848" stroke-width="2.500"/></svg>
      <span class="relative w-[132px] pl-[27px] text-[#c4c4c4]">eagle refined fork*</span>
      <svg class="relative ml-[28px]" width="12" height="12" viewBox="0 0 12 12"><path d="M1.500 1.500l9 9M10.500 1.500l-9 9" stroke="#3a3a3a" stroke-width="2.500"/></svg>
      <svg class="relative ml-[31px]" width="14" height="14" viewBox="0 0 14 14"><path d="M7 1.500v11M1.500 7h11" stroke="#dcdcdc" stroke-width="3"/></svg>
    </div>
    <div class="h-[5px] shrink-0 bg-[#5c5c5c]"></div>

    <!-- drawing area -->
    <main class="relative h-[803px] shrink-0 overflow-hidden bg-[#212830]">
      <svg class="absolute top-0 left-0" width="1985" height="803" viewBox="3 226 1985 803" fill="none" stroke="#d6d9db" stroke-width="1.500">
        <g transform="translate(460 280) scale(.5102 .4464)">
          <path vector-effect="non-scaling-stroke" d="M1568 262L1497 248 1416 227 1475 312 1457 319 1070 294 704 164 570 72 517 49 458 91 308 178 255 241 211 423 227 481 452 558 627 591 744 573 1028 408 1077 395 1131 419 1350 598 1419 723 1444 980 1442 1022 1406 1011 1390 1062 1355 1044 1315 1120 1243 1155 1248 1018 1137 1029 1132 1018 1176 895 1155 829 1102 801 929 824 873 886 865 998 910 1118 1007 1184 1131 1171 1153 1161 1164 1167 1137 1231 1046 1293 941 1291 845 1252 754 1136 697 938 654 869 578 855 545 893 503 1080 425 1241 365 1297 174 1481 297 1256 412 947 408 865 359 812 156 714 0 681"/>
          <path vector-effect="non-scaling-stroke" d="M627 629L739 620 1028 454 1111 455 1353 661 1406 788 1402 941 1374 984 1350 845 1268 657 1111 542 1055 542 893 634 879 664 910 656 1053 602 1137 620 1238 690 1301 795 1338 945 1288 1090 1267 950 1212 987 1216 867 1188 785 1116 750 936 769 866 813 832 895 857 1106 1006 1223 1095 1233 1067 1252 957 1258 857 1217 792 1120 742 954 701 858 624 815 607 783z"/>
          <path vector-effect="non-scaling-stroke" d="M452 595L568 609 593 652 589 726 563 808 487 828 411 808 389 743 423 631z"/>
          <path vector-effect="non-scaling-stroke" d="M197 494L372 575 397 625 356 738 262 717 73 636 162 501z"/>
          <path vector-effect="non-scaling-stroke" d="M440 861L514 861 499 1000 443 1156 355 1297 264 1374 382 1131z"/>
        </g>
        <path d="M460 584L433.700 578.400 362 558.700 312 514 241 453 153 431 18 425 3 440"/>
        <path d="M1260 397L1464 429.800 1626 424 1700 407 1747 396.400 1771.300 382.500 1730.300 362 1731.300 357 1866 352.500"/>
        <path d="M1988 250.500L1967.700 256.800 1977 263 1988 274.600"/>
        <path d="M3 965.300H1525.500V568.200H1988" stroke="#c4c7c9" stroke-width="1.700"/>
        <path d="M1645.500 1029V689H1988" stroke="#cfd1d3" stroke-width="2"/>
        <!-- UCS icon -->
        <path d="M23.500 946v63.500H87M18.500 1003.500h11v11h-11z" stroke="#d8d8d8" stroke-width="1.400"/>
        <g fill="#d8d8d8" stroke="none" font-family="Open Sans" font-weight="300" font-size="24" letter-spacing="0"><text x="33" y="941" text-anchor="middle" textLength="17" lengthAdjust="spacingAndGlyphs">Y</text><text x="100" y="1008" text-anchor="middle" textLength="17" lengthAdjust="spacingAndGlyphs">X</text></g>
        <!-- viewport controls -->
        <g stroke="none" fill="#f0f0f0"><path d="M1912 245h13v4h-13z"/><path d="M1941 239h9v9h-2v-7h-7z"/><path fill-rule="evenodd" d="M1937 242h10v10h-10zM1940 245v4h4v-4z"/></g>
        <path d="M1963.500 240.500l9 9M1972.500 240.500l-9 9" stroke="#f0f0f0" stroke-width="2.500"/>
        <!-- view cube -->
        <circle cx="1894.500" cy="349" r="60" stroke="#464b54" stroke-width="15"/>
        <path d="M1866 320.500h56.500v56.500H1866z" fill="#b9babb" stroke="#8d8f92"/><path d="M1877 332h35v35h-35z" fill="#a9b0b9" stroke="none"/>
        <path d="M1731 357L1866.700 352.500 1922.700 350.700 1983.700 333.600 1988 323" stroke="#dcdcdc"/>
        <g fill="#bcbdbe" stroke="#bcbdbe" stroke-width=".5" font-family="Liberation Sans" font-weight="700" font-size="22.500" text-anchor="middle" letter-spacing="0"><text x="1894" y="293.500">N</text><text x="1894" y="420.500">S</text><text x="1831" y="357">W</text><text x="1958" y="357">E</text></g>
        <text x="1894.500" y="354.500" fill="#33373d" stroke="none" font-family="Open Sans" font-weight="600" font-size="15" letter-spacing="0" text-anchor="middle" textLength="25" lengthAdjust="spacingAndGlyphs">TOP</text>
        <rect x="1864.500" y="449.500" width="60" height="20" rx="5" fill="#9d9ca9" stroke="#b4b4be"/>
        <text x="1871" y="463.500" fill="#55575f" stroke="none" font-family="Liberation Sans" font-size="12.500" letter-spacing="0" textLength="28" lengthAdjust="spacingAndGlyphs">WCS</text>
        <path d="M1907 457h11l-5.500 4z" stroke="#8d8d98" stroke-width="1"/>
        <!-- navigation bar -->
        <rect x="1943" y="503" width="41" height="266" rx="4" fill="#6b7176" fill-opacity=".8" stroke="none"/>
        <g stroke="#474d53" stroke-width="1.200">
          <circle cx="1976" cy="509" r="4"/><circle cx="1976" cy="761" r="4"/>
          <path d="M1963 526h14v13a13.500 13.500 0 1 1-14-13z"/><circle cx="1963.500" cy="540" r="7.500"/>
          <path d="M1955 605c-3-6-8-7-4-11 4 0 5 4 7 5l-2-14c0-3 3-3 4 0l2 7v-9c0-4 4-4 4 0l1 9 2-8c1-3 4-2 4 1l-2 10c2-4 5-4 5-1-2 6-4 14-7 13h-11z"/>
          <path d="M1949 620h4v-4h4v4h4v4h-4v4h-4v-4h-4z"/><circle cx="1968" cy="633" r="6.500"/><path d="M1972 638l5 4" stroke-width="3"/>
          <path d="M1961 692v-24l2.500-5 2.500 5v24zM1961 674c-14 0-14 8 0 8M1966 674c14 0 14 8 0 8M1956 686l-4-4 4-4"/>
          <path d="M1948 714h8v8h-8zM1959 714h8v8h-8zM1969 714h8v8h-8zM1948 726h21v17h-21z"/>
        </g>
        <path d="M1961 564h6l-3 3zM1961 652h6l-3 3zM1961 700h6l-3 3zM1954 730l9 5-9 5z" fill="#3c4248" stroke="none"/>
      </svg>

      <div class="absolute top-[8px] left-[4px] tracking-[-0.6px] text-[#f0f0f0]">[−][Top][2D Wireframe]</div>

      <!-- command history -->
      <div class="absolute top-[710px] left-[468px] flex flex-col items-start gap-[1px] font-['DejaVu_Sans_Mono',monospace] text-[14.6px] leading-[19px] tracking-[0.02px] text-[#f0f0f0]">
        <div class="rounded-[2px] bg-[#5c5e60]/90 px-[2px] text-[#c8c8c8]">Command:</div>
        <div class="rounded-[2px] bg-[#5c5e60]/90 px-[2px]">Specify corner of window, enter a scale factor (nX or nXP), or</div>
        <div class="rounded-[2px] bg-[#5c5e60]/90 px-[2px]">[All/Center/Dynamic/Extents/Previous/Scale/Window/Object] &lt;real time&gt;:</div>
      </div>

      <!-- command line -->
      <div class="absolute top-[770px] left-[397px] flex h-[33px] w-[1191px] items-center bg-[#bcbdbf]">
        <div class="h-full w-[67px] bg-linear-to-b from-[#6a6a6a] to-[#3a3a3a]"><svg width="67" height="33" viewBox="400 996 67 33"><path d="M406.500 1001v22M410.500 1001v22" stroke="#999" stroke-width="2" stroke-dasharray="2 2"/><path d="M420 1008l10 10M430 1008l-10 10" stroke="#d8d8d8" stroke-width="2.500"/><path d="M450 1011l10 9" stroke="#dcdcdc" stroke-width="4"/><path d="M446 1006l4 3 2-1 0-3c4 1 5 6 1 8-5 2-9-2-7-7z" fill="#dcdcdc"/></svg></div>
        <svg width="46" height="33" viewBox="467 996 46 33"><rect x="474.500" y="1004.500" width="18" height="16" rx="1.500" fill="#b2c0c8" stroke="#7d8d96"/><path d="M478 1008l4 4-4 4M484 1016h5" stroke="#3c4a54" stroke-width="1.500" fill="none"/><path d="M497 1010h7l-3.500 4z" fill="#666"/></svg>
        <span class="w-[1064px] font-['DejaVu_Sans_Mono',monospace] text-[14.6px] tracking-normal text-[#6f7072] italic">Type a command</span>
        <svg width="8" height="6" viewBox="0 0 8 6"><path d="M0 6h8L5 0H3z" fill="#111"/></svg>
      </div>
    </main>

    <!-- layout tabs and status bar -->
    <footer class="relative flex h-[26px] shrink-0 bg-[#383838]">
      <svg class="absolute top-0 left-0" width="300" height="26" viewBox="3 1029 300 26"><path d="M3 1030h285" stroke="#666"/><path d="M92 1031h80c-6 4-4 21-13 21h-55c-9 0-6-17-12-21zM174 1031h86c-6 4-6 21-15 21h-56c-9 0-8-17-15-21z" fill="#545454"/><path d="M16 1031h76c-6 4-6 21-14 21H36c-10 0-8-17-20-21z" fill="url(#tabm)"/><path d="M260 1031h28c-1 10-3 19-9 19h-18c-6 0-1-12-1-19z" fill="#4c4c4c"/></svg>
      <span class="relative w-[101px] pl-[29px] leading-[23px] font-bold text-white">Model</span>
      <span class="relative w-[82px] leading-[23px] text-[#b9b9b9]">Layout1</span>
      <span class="relative w-[78px] leading-[23px] text-[#b9b9b9]">Layout2</span>
      <svg class="relative mt-[6px]" width="16" height="12" viewBox="0 0 16 12"><path d="M8 1v10M3 6h10" stroke="#ddd" stroke-width="1.800"/></svg>
      <div class="ml-auto flex h-[26px] w-[747px] items-end border-t border-[#6a6a6a] bg-[#4c4c4c]">
        <div class="h-[25px] w-[62px] border border-b-0 border-[#6c6c6c] pl-[5px] leading-[30px] text-[#ececec]">MODEL</div>
        <svg width="685" height="25" viewBox="1303 1030 685 25" fill="none" stroke="#dcdcdc" stroke-width="1.500">
          <path d="M1304.500 1055v-24h80v24M1388.500 1055v-24h128v24M1517.500 1055v-24h82v24M1602.500 1055v-24h136v24M1742.500 1055v-24h48v24M1793.500 1055v-24h30v24M1826.500 1055v-24h30v24M1859.500 1055v-24h63v24M1925.500 1055v-24h61v24" stroke="#6c6c6c"/>
          <path d="M1519.500 1032h27v24h-27zM1602.500 1032h27v24h-27z" fill="#4d86c6" stroke="none"/>
          <path d="M1315.500 1037v18M1321.500 1037v18M1327.500 1037v18M1311 1041h19M1311 1046.500h19M1311 1052h19"/>
          <path d="M1344 1041h17M1344 1047h17M1344 1053h17" stroke-width="2.500" stroke-dasharray="2.500 4"/>
          <path d="M1371 1045h9l-4.500 6zM1454 1045h9l-4.500 6zM1503 1045h9l-4.500 6zM1584 1045h9l-4.500 6zM1724 1045h10l-5 6zM1777 1045h9l-4.500 6z" fill="#eee" stroke="none"/>
          <path d="M1395 1037v18M1395 1049h7v6"/>
          <path d="M1440 1042a8.500 8.500 0 1 0 1 10M1427 1048h16M1431 1048l11-10M1437 1044c3 2 3 5 2 8"/>
          <path d="M1474 1038l17 17" stroke="#d85050"/><path d="M1482.500 1037v18" stroke="#6fc280"/><path d="M1481 1045h4v4h-4z" fill="#fff" stroke="none"/>
          <path d="M1523 1054h20M1525 1053l13-15" stroke="#fff"/><path d="M1530 1045h5v5h-5z" fill="#fff" stroke="none"/>
          <path d="M1564 1040.500h9V1055M1556 1047v8"/><path d="M1554.500 1037.500h6v6h-6z" stroke="#f0a878" stroke-width="2"/>
          <g fill="#e2e2e2" stroke="none"><path d="M1615 1037l4 8 1 6 3 4h-5l-3-4-3 4h-5l3-5 2-6z" fill="#fff"/><path d="M1646 1037l4 8 1 6 3 4h-5l-3-4-3 4h-5l3-5 2-6zM1677 1037l3 8 1 6 3 4h-5l-2-4-3 4h-4l3-5 2-6zM1653 1036l-4 6h3l-2 4 6-5h-3l3-4z"/></g>
          <circle cx="1622.500" cy="1042" r="3.500"/>
          <circle cx="1756" cy="1047" r="5.500" stroke-width="4.500"/><circle cx="1756" cy="1047" r="8.500" stroke-width="3" stroke-dasharray="3.300 3.375"/>
          <path d="M1808 1038v17M1798 1047.500h20" stroke-width="2.800"/>
          <path d="M1832.500 1037.500h7v8h-7zM1836 1055l4-6 3 6"/><circle cx="1847" cy="1046" r="4.500"/>
          <path d="M1865 1038h14v10h-14z" fill="#5a9fe0" stroke="none"/><path d="M1865 1048h11v8h-11z" fill="#f4d85a" stroke="none"/><path d="M1872 1037v12M1866 1043h12" stroke="#fff"/><path d="M1878 1044l6 11h-12z" fill="#f6ac2c" stroke="none"/>
          <path d="M1894 1038h17v14h-17z" fill="#eee" stroke="none"/><path d="M1896 1050l4-9 3 5 3-5 4 8" stroke="#444"/><path d="M1908 1047l5 8h-10z" fill="#ee7f3a" stroke="none"/>
          <path d="M1931.500 1040h19v15h-19zM1935 1053l4-4M1947 1043l-4 4M1935 1049v4h4M1943 1043h4v4"/>
          <path d="M1961 1040h20M1961 1047h20M1961 1054h20" stroke-width="2.500"/>
          <text x="1699" y="1051.500" font-family="Open Sans" font-size="16" fill="#eee" stroke="none" letter-spacing="0" textLength="20" lengthAdjust="spacingAndGlyphs">1:1</text>
        </svg>
      </div>
    </footer>
  </div>

  <!-- right frame -->
  <div class="flex w-[12px] shrink-0 flex-col">
    <div class="h-[290px] w-[10px] border-r border-l border-[#d8dcde] bg-linear-to-b from-[#3a3a3a] via-[#8d9297] to-[#e4e6e7]"></div>
    <div class="w-[10px] grow border-r-2 border-l-2 border-[#9b9fa2] bg-linear-to-b from-[#4a4d50] via-[#26292c] to-[#2b2e31]"></div>
  </div>
</div>
</body>
</html>
